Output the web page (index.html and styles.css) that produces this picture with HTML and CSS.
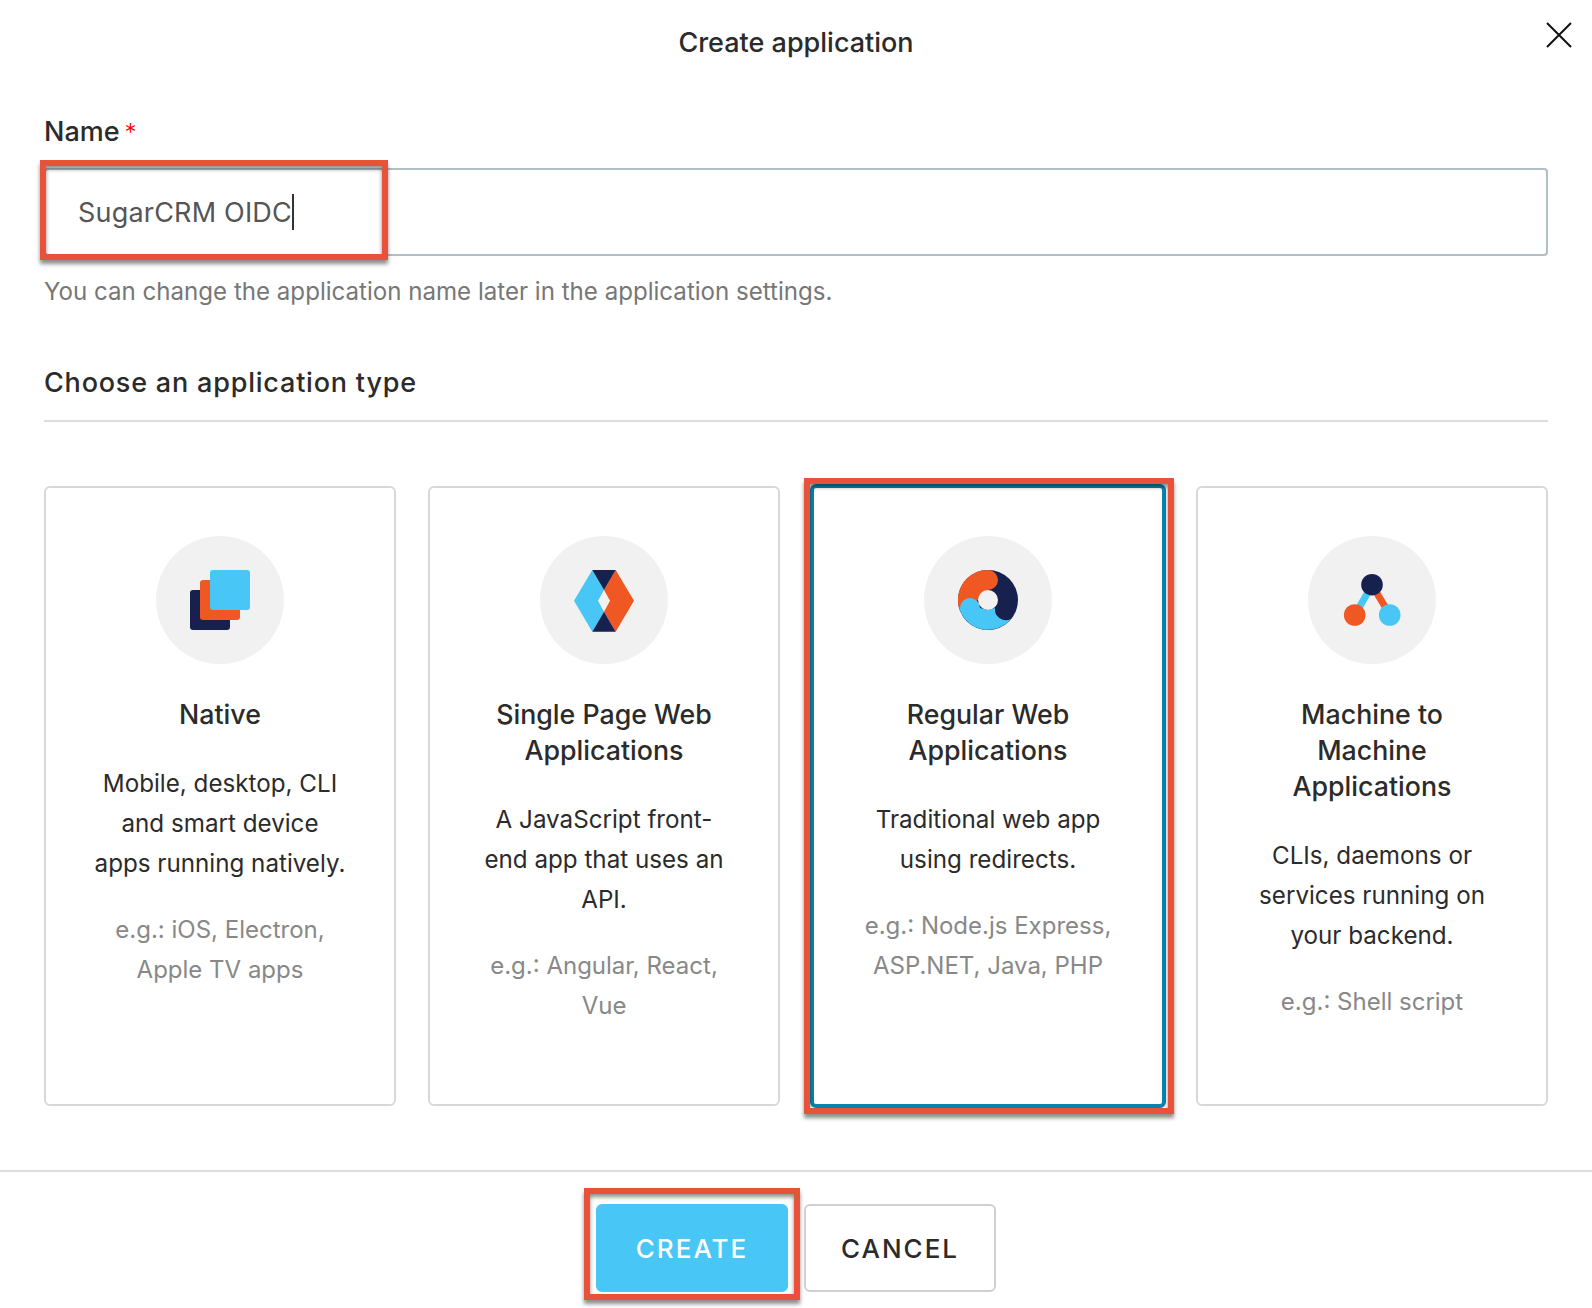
FILE: index.html
```html
<!DOCTYPE html>
<html lang="en">
<head>
    <meta charset="UTF-8">
    <title>Create application</title>
    <link rel="stylesheet" href="styles.css">
</head>
<body>

<header class="modal-header">
    <h1>Create application</h1>
    <svg class="close-icon" width="26" height="26" viewBox="0 0 26 26">
        <path d="M1 1L25 25M25 1L1 25" stroke="#111" stroke-width="2" fill="none"/>
    </svg>
</header>

<main class="modal-body">
    <label class="field-label">Name<span class="required">*</span></label>
    <div class="text-input">
        <span class="input-value">SugarCRM OIDC</span><span class="caret"></span>
        <div class="callout callout-input"></div>
    </div>
    <p class="helper">You can change the application name later in the application settings.</p>

    <h2 class="section-title">Choose an application type</h2>

    <div class="type-grid">
        <div class="type-card">
            <svg class="type-icon" width="128" height="128" viewBox="0 0 128 128">
                <circle cx="64" cy="64" r="64" fill="#f1f1f1"/>
                <rect x="34" y="54" width="40" height="40" rx="3" fill="#16214d"/>
                <rect x="44" y="44" width="40" height="40" rx="3" fill="#ef5823"/>
                <rect x="54" y="34" width="40" height="40" rx="3" fill="#48c6f5"/>
            </svg>
            <h3>Native</h3>
            <p class="desc">Mobile, desktop, CLI<br>and smart device<br>apps running natively.</p>
            <p class="examples">e.g.: iOS, Electron,<br>Apple TV apps</p>
        </div>

        <div class="type-card">
            <svg class="type-icon" width="128" height="128" viewBox="0 0 128 128">
                <circle cx="64" cy="64" r="64" fill="#f1f1f1"/>
                <path d="M52.3 34L34 64.7L52.3 95.7L64 75.7L58 64.7L64 54Z" fill="#48c6f5"/>
                <path d="M75.7 34L94 64.7L75.7 95.7L64 75.7L70 64.7L64 54Z" fill="#ef5823"/>
                <path d="M52.3 34H75.7L64 54Z" fill="#16214d"/>
                <path d="M52.3 95.7H75.7L64 75.7Z" fill="#16214d"/>
            </svg>
            <h3>Single Page Web<br>Applications</h3>
            <p class="desc">A JavaScript front-<br>end app that uses an<br>API.</p>
            <p class="examples">e.g.: Angular, React,<br>Vue</p>
        </div>

        <div class="type-card selected">
            <svg class="type-icon" width="128" height="128" viewBox="0 0 128 128">
                <circle cx="64" cy="64" r="64" fill="#f1f1f1"/>
                <circle cx="64" cy="64" r="30" fill="#16214d"/>
                <path d="M64 34A30 30 0 0 0 36 75L54 64L64 54A10 10 0 0 0 64 34Z" fill="#ef5823"/>
                <path d="M35.5 73A30 30 0 0 0 87 83A11 11 0 0 1 71 72L64 74L56 72A10 10 0 0 0 36 72Z" fill="#48c6f5"/>
                <circle cx="64" cy="64" r="10" fill="#f1f1f1"/>
            </svg>
            <h3>Regular Web<br>Applications</h3>
            <p class="desc">Traditional web app<br>using redirects.</p>
            <p class="examples">e.g.: Node.js Express,<br>ASP.NET, Java, PHP</p>
            <div class="callout callout-card"></div>
        </div>

        <div class="type-card">
            <svg class="type-icon" width="128" height="128" viewBox="0 0 128 128">
                <circle cx="64" cy="64" r="64" fill="#f1f1f1"/>
                <path d="M64 49L47 79" stroke="#48c6f5" stroke-width="7"/>
                <path d="M64 49L82 79" stroke="#ef5823" stroke-width="7"/>
                <circle cx="64" cy="48.7" r="10.8" fill="#16214d"/>
                <circle cx="46.7" cy="79" r="10.8" fill="#ef5823"/>
                <circle cx="81.7" cy="79" r="10.8" fill="#48c6f5"/>
            </svg>
            <h3>Machine to<br>Machine<br>Applications</h3>
            <p class="desc">CLIs, daemons or<br>services running on<br>your backend.</p>
            <p class="examples">e.g.: Shell script</p>
        </div>
    </div>
</main>

<footer class="modal-footer">
    <button class="btn btn-primary">CREATE<span class="callout callout-btn"></span></button>
    <button class="btn">CANCEL</button>
</footer>

</body>
</html>
```

FILE: styles.css
```css
body {
    font-family: 'Inter', 'Liberation Sans', sans-serif;
    background-color: #fff;
    color: #2b2b2b;
    margin: 0;
    padding: 0;
}

.modal-header {
    position: relative;
    height: 84px;
    display: flex;
    align-items: center;
    justify-content: center;
}

.modal-header h1 {
    margin: 0;
    font-size: 27px;
    font-weight: 500;
}

.close-icon {
    position: absolute;
    top: 22px;
    right: 20px;
}

.modal-body {
    padding: 0 44px;
}

.field-label {
    display: block;
    font-size: 27px;
    font-weight: 500;
    line-height: 36px;
    margin-top: 30px;
}

.required {
    color: #f00;
    font-weight: 300;
    font-size: 24px;
    line-height: 0;
    margin-left: 5px;
}

.text-input {
    position: relative;
    display: flex;
    align-items: center;
    box-sizing: border-box;
    height: 88px;
    margin-top: 18px;
    padding: 0 32px;
    border: 2px solid #b0bec5;
    border-radius: 4px;
    font-size: 27px;
    color: #555;
}

.input-value {
    padding-top: 1px;
    letter-spacing: 0.2px;
}

.caret {
    width: 2px;
    height: 36px;
    background-color: #333;
}

.helper {
    margin: 16px 0 0;
    font-size: 24.1px;
    line-height: 40px;
    color: #777;
}

.section-title {
    margin: 53px 0 0;
    padding-bottom: 19px;
    border-bottom: 2px solid #ddd;
    font-size: 27px;
    font-weight: 500;
    line-height: 36px;
    letter-spacing: 0.8px;
}

.type-grid {
    display: grid;
    grid-template-columns: repeat(4, 1fr);
    gap: 32px;
    margin-top: 64px;
}

.type-card {
    position: relative;
    box-sizing: border-box;
    height: 620px;
    padding-top: 48px;
    border: 2px solid #d8d8d8;
    border-radius: 6px;
    text-align: center;
}

.type-card.selected {
    height: 624px;
    margin: -2px;
    border: 4px solid #0a84ae;
}

.type-icon {
    display: block;
    margin: 0 auto;
}

.type-card h3 {
    margin: 32px 0 0;
    font-size: 26.75px;
    font-weight: 500;
    line-height: 36px;
}

.desc {
    margin: 32px 0 0;
    font-size: 24.2px;
    line-height: 40px;
}

.examples {
    margin: 26px 0 0;
    font-size: 24px;
    line-height: 40px;
    color: #888;
}

.modal-footer {
    display: flex;
    justify-content: center;
    gap: 16px;
    margin-top: 64px;
    padding: 32px 0 16px;
    border-top: 2px solid #ddd;
}

.btn {
    position: relative;
    width: 192px;
    height: 88px;
    background-color: #fff;
    color: #2b2b2b;
    border: 2px solid #d0d0d0;
    border-radius: 6px;
    font-family: inherit;
    font-size: 26px;
    font-weight: 500;
    letter-spacing: 2px;
}

.btn-primary {
    background-color: #48c6f5;
    border-color: #48c6f5;
    color: #fff;
}

/* red annotation frames drawn over the screenshot */
.callout {
    position: absolute;
    box-sizing: border-box;
    border: 6px solid #e9523a;
    box-shadow: 0 4px 4px rgba(0, 0, 0, 0.45), inset 0 3px 4px rgba(0, 0, 0, 0.45);
    pointer-events: none;
}

.callout-input {
    left: -6px;
    top: -10px;
    width: 348px;
    height: 100px;
}

.callout-card {
    left: -10px;
    top: -10px;
    right: -12px;
    bottom: -10px;
}

.callout-btn {
    left: -14px;
    top: -18px;
    right: -14px;
    bottom: -10px;
}
```
